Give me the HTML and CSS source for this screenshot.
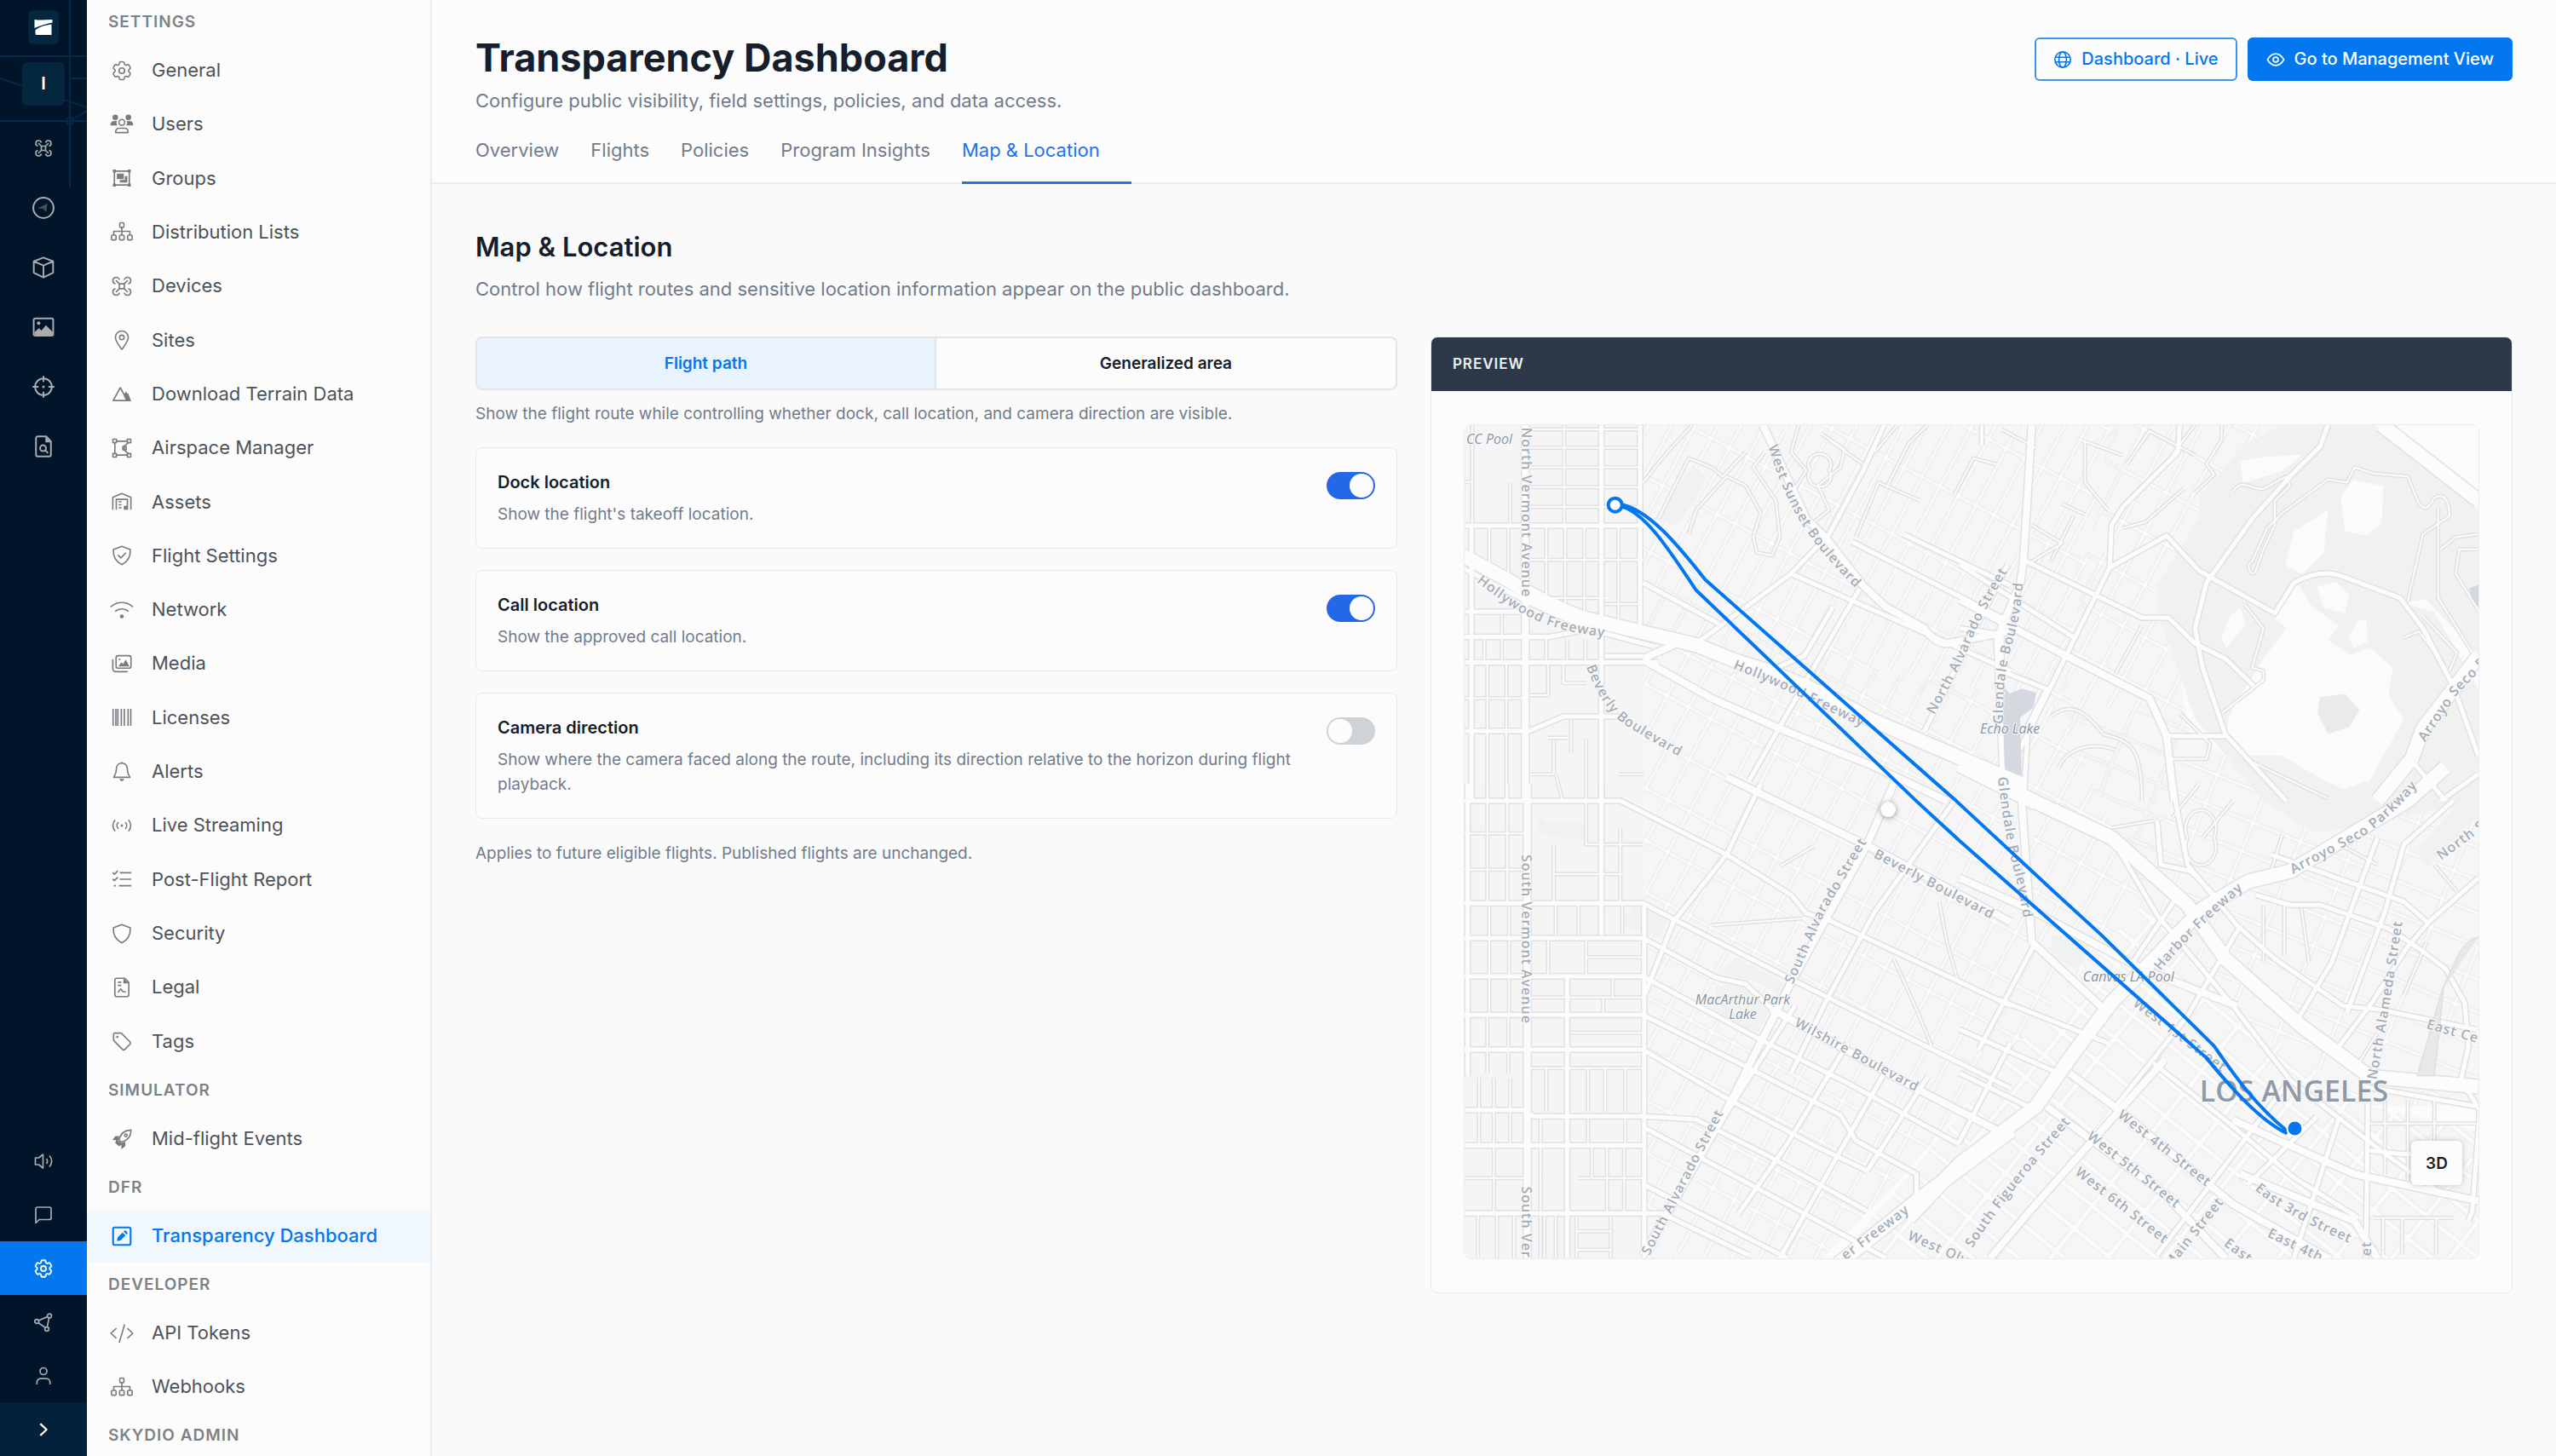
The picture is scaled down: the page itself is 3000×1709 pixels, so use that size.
FILE: index.html
```html
<!DOCTYPE html>
<html lang="en">
<head>
<meta charset="utf-8">
<meta name="viewport" content="width=device-width, initial-scale=1">
<title>Transparency Dashboard · Map &amp; Location</title>
<link rel="stylesheet" href="styles.css">
</head>
<body>
<svg class="sprite" aria-hidden="true">
  <symbol id="i-gear" viewBox="0 0 24 24"><path d="M9.594 3.94c.09-.542.56-.94 1.11-.94h2.593c.55 0 1.02.398 1.11.94l.213 1.281c.063.374.313.686.645.87.074.04.147.083.22.127.325.196.72.257 1.075.124l1.217-.456a1.125 1.125 0 0 1 1.37.49l1.296 2.247a1.125 1.125 0 0 1-.26 1.431l-1.003.827c-.293.241-.438.613-.43.992a7.723 7.723 0 0 1 0 .255c-.008.378.137.75.43.991l1.004.827c.424.35.534.955.26 1.43l-1.298 2.247a1.125 1.125 0 0 1-1.369.491l-1.217-.456c-.355-.133-.75-.072-1.076.124a6.47 6.47 0 0 1-.22.128c-.331.183-.581.495-.644.869l-.213 1.281c-.09.543-.56.94-1.11.94h-2.594c-.55 0-1.019-.398-1.11-.94l-.213-1.281c-.062-.374-.312-.686-.644-.87a6.52 6.52 0 0 1-.22-.127c-.325-.196-.72-.257-1.076-.124l-1.217.456a1.125 1.125 0 0 1-1.369-.49l-1.297-2.247a1.125 1.125 0 0 1 .26-1.431l1.004-.827c.292-.24.437-.613.43-.991a6.932 6.932 0 0 1 0-.255c.007-.38-.138-.751-.43-.992l-1.004-.827a1.125 1.125 0 0 1-.26-1.43l1.297-2.247a1.125 1.125 0 0 1 1.37-.491l1.216.456c.356.133.751.072 1.076-.124.072-.044.146-.086.22-.128.332-.183.582-.495.644-.869l.214-1.28Z"/><circle cx="12" cy="12" r="2.8"/></symbol>
  <symbol id="i-users" viewBox="0 0 24 24"><g class="solid"><circle cx="5.4" cy="5" r="2.8"/><circle cx="18.6" cy="5" r="2.8"/><path d="M.5 13c0-3 1.600-4.400 4-4.400h2.600c-.8 1.800-.5 3.200.6 4.400zM23.500 13c0-3-1.600-4.400-4-4.400h-2.600c.8 1.800.5 3.200-.6 4.400z"/></g><circle cx="12" cy="10" r="2.900"/><path d="M5.700 20.200c0-3 1.400-4.300 3.600-4.300h5.400c2.200 0 3.600 1.300 3.600 4.300z"/></symbol>
  <symbol id="i-groups" viewBox="0 0 24 24"><path d="M4.500 5h15v14h-15z"/><g class="solid"><path d="M7 7.500h7v5.500H7zM15 10h2.500v6.500H10V14h5z"/><path d="M3 3.500h3v3H3zM18 3.500h3v3h-3zM3 17.500h3v3H3zM18 17.500h3v3h-3z"/></g></symbol>
  <symbol id="i-tree" viewBox="0 0 24 24"><rect x="9.900" y="3" width="4.200" height="4.600" rx="1"/><rect x="1.600" y="15.400" width="4.600" height="4.800" rx="1"/><rect x="9.700" y="15.400" width="4.600" height="4.800" rx="1"/><rect x="17.800" y="15.400" width="4.600" height="4.800" rx="1"/><path d="M12 7.600v7.800M3.900 15.400v-3.800h16.200v3.800"/></symbol>
  <symbol id="i-drone" viewBox="0 0 24 24"><path d="M9.500 9.500h5v5h-5zM9.500 9.500 6 6M14.500 9.500 18 6M9.500 14.500 6 18M14.500 14.500 18 18"/><path d="M9.500 5.500a3.300 3.300 0 1 0-4 4M14.500 5.500a3.300 3.300 0 1 1 4 4M9.500 18.500a3.300 3.300 0 1 1-4-4M14.500 18.500a3.300 3.300 0 1 0 4-4"/></symbol>
  <symbol id="i-pin" viewBox="0 0 24 24"><path d="M12 21.500c-2.500-3.500-6.500-8-6.500-12a6.500 6.500 0 0 1 13 0c0 4-4 8.500-6.500 12z"/><circle cx="12" cy="9.500" r="2.300"/></symbol>
  <symbol id="i-terrain" viewBox="0 0 24 24"><path d="M3.300 19 10.500 6l3.700 7 2.800 6z"/><path class="solid" d="M14.500 12.500l1.700-2.700 1.300 2 1 .2 2.900 7.700h-4z"/></symbol>
  <symbol id="i-airspace" viewBox="0 0 24 24"><path d="M6 5h12M6 19h12M5 6.500v11M18.500 6.500l-4 3.500v4l4 3.500"/><rect x="3" y="3" width="3.500" height="3.500"/><rect x="17.500" y="3" width="3.500" height="3.500"/><rect x="3" y="17.500" width="3.500" height="3.500"/><rect x="17.500" y="17.500" width="3.500" height="3.500"/><rect x="13" y="10.300" width="3.400" height="3.400"/></symbol>
  <symbol id="i-assets" viewBox="0 0 24 24"><path d="M2.900 20V7.500L12 3.700l9.100 3.800V20M6.400 20V9.500h11.200V20M8.800 12h3M8.800 15h3M8.800 18h3"/><path class="solid" d="M14 16h3.500v4H14z"/></symbol>
  <symbol id="i-shield-check" viewBox="0 0 24 24"><path d="M12 2.800 20.500 6c.4 6.500-2 12-8.500 15.200C5.500 18 3.100 12.500 3.500 6zM8 11.500l3 3 5.200-5.300"/></symbol>
  <symbol id="i-shield" viewBox="0 0 24 24"><path d="M12 2.800 20.500 6c.4 6.500-2 12-8.500 15.200C5.500 18 3.100 12.500 3.500 6z"/></symbol>
  <symbol id="i-wifi" viewBox="0 0 24 24"><path d="M.8 8.800c6.400-5.700 16-5.700 22.400 0M5.200 13.400c4-3.300 9.600-3.300 13.600 0"/><circle class="solid" cx="12" cy="18.500" r="1.900"/></symbol>
  <symbol id="i-media" viewBox="0 0 24 24"><rect x="6.200" y="4" width="15" height="12.500" rx="2"/><path d="M2.900 7.500v9.500a3 3 0 0 0 3 3h12"/><path class="solid" d="M8.500 14.800 11.500 10.500l1.700 2 2.800-4.500 3.600 6.800z"/><circle class="solid" cx="9.800" cy="7.700" r=".9"/></symbol>
  <symbol id="i-barcode" viewBox="0 0 24 24"><path d="M3.200 3.500v17M6 3.500v17M8 3.500v17M11.500 3.500v17M14.500 3.500v17M18.300 3.500v17M21 3.500v17"/></symbol>
  <symbol id="i-bell" viewBox="0 0 24 24"><path d="M12 3.200c-3.600 0-5.500 2.800-5.500 6 0 4.300-1.500 6-2.700 8.300h16.400c-1.200-2.300-2.700-4-2.700-8.300 0-3.200-1.900-6-5.500-6zM12 2v1.200"/><path class="solid" d="M9.800 19h4.400c-.3 3-4.100 3-4.400 0z"/></symbol>
  <symbol id="i-live" viewBox="0 0 24 24"><path d="M5.300 6.200c-3 3.400-3 8.200 0 11.600M18.700 6.200c3 3.400 3 8.200 0 11.600M8.600 8.600c-2 2-2 4.800 0 6.800M15.400 8.600c2 2 2 4.800 0 6.800"/><circle class="solid" cx="12" cy="12" r="1.300"/></symbol>
  <symbol id="i-checklist" viewBox="0 0 24 24"><path d="M10 5.500h11.500M10 12h11.500M9 18.500h12.500M2.800 5.200l1.700 1.700L8 3.500M2.800 11.700l1.700 1.700L8 10"/><circle class="solid" cx="5" cy="18.500" r="1"/></symbol>
  <symbol id="i-legal" viewBox="0 0 24 24"><path d="M15 2.800H7a2 2 0 0 0-2 2v14.400a2 2 0 0 0 2 2h10a2 2 0 0 0 2-2V7zM8 6.800h3.500M8 10h3.500M8 17c1.500-1 2-3.500 3-3.500s.8 2.500 2 2.500 1.500.5 3 .5"/><path class="solid" d="M13.500 2.800V8H19z"/></symbol>
  <symbol id="i-tag" viewBox="0 0 24 24"><path d="M3.700 5v6.300L12.800 20.400a1.500 1.500 0 0 0 2.100 0L20.300 15a1.500 1.500 0 0 0 0-2.100L11.400 4H4.700a1 1 0 0 0-1 1z"/><circle class="solid" cx="7.500" cy="7.800" r="1.200"/></symbol>
  <symbol id="i-rocket" viewBox="0 0 24 24"><path d="M9 12.500C11 6 15.500 3 21.300 2.900 21.300 8.500 18 13 11.700 15.300z"/><circle cx="16" cy="8.200" r="1.300"/><path class="solid" d="M9.500 9H5.500L2.500 12.800l3.800.3-1 2.700 3.700 3.200 2.500-1v4.200l4-3.200v-4.500l-4 1.700-3.400-3z"/></symbol>
  <symbol id="i-edit" viewBox="0 0 24 24"><rect x="3.200" y="3.200" width="17.600" height="17.600" rx="1.500"/><path class="solid" d="M7 17l.8-3.700 5-5 2.900 2.900-5 5zM13.800 7.300l1-1c.8-.8 3.700 2.100 2.900 2.900l-1 1z"/></symbol>
  <symbol id="i-code" viewBox="0 0 24 24"><path d="M6.500 7 1 12l5.500 5M17.500 7l5.500 5-5.500 5M14.800 3 9.400 21.500"/></symbol>
  <symbol id="i-globe" viewBox="0 0 24 24"><circle cx="12" cy="12" r="10"/><ellipse cx="12" cy="12" rx="4.800" ry="10"/><path d="M2.500 9h19M2.500 15h19"/></symbol>
  <symbol id="i-eye" viewBox="0 0 24 24"><path d="M1.500 12C5 6.200 8.500 4.500 12 4.500S19 6.200 22.500 12C19 17.800 15.500 19.500 12 19.500S5 17.800 1.500 12z"/><circle cx="12" cy="12" r="3.200"/></symbol>
  <symbol id="i-compass" viewBox="0 0 24 24"><circle cx="12" cy="12" r="10.200"/><path class="dim" d="M6 12.500 16 7.500l-1.200 9-3-3.600z"/></symbol>
  <symbol id="i-cube" viewBox="0 0 24 24"><path d="M12 2 21.700 5.800v11.400L12 22l-9.700-4.800V5.800zM2.300 5.800 12 10l9.700-4.200M12 10v12"/></symbol>
  <symbol id="i-image" viewBox="0 0 24 24"><rect x="2.200" y="3.200" width="19.600" height="17.300" rx="1.500"/><circle class="solid" cx="7.200" cy="8" r="1.700"/><path class="solid" d="M3 20v-3l4.500-4 2.500 2.500 4.500-5.500 6.800 7V20z"/></symbol>
  <symbol id="i-target" viewBox="0 0 24 24"><circle cx="12" cy="12" r="8.400"/><path d="M12 1v6M12 17v6M1 12h6M17 12h6"/><circle class="solid" cx="12" cy="12" r="1.300"/></symbol>
  <symbol id="i-file-search" viewBox="0 0 24 24"><path d="M15 2H6.200A1.700 1.700 0 0 0 4.500 3.700v16.600A1.700 1.700 0 0 0 6.200 22h11.600a1.700 1.700 0 0 0 1.700-1.700V7z"/><path class="solid" d="M14 2v6h5.500z"/><circle cx="11.600" cy="13.800" r="3"/><path d="M14 16l2.500 2.800"/></symbol>
  <symbol id="i-sound" viewBox="0 0 24 24"><path d="M2.500 8v8h4l5 4V4l-5 4zM15.500 9c1.500 1.500 1.500 4.500 0 6M19 5.500c3.500 3.500 3.500 9.500 0 13"/></symbol>
  <symbol id="i-chat" viewBox="0 0 24 24"><path d="M3 21.500V5a2 2 0 0 1 2-2h14a2 2 0 0 1 2 2v10.500a2 2 0 0 1-2 2H7z"/></symbol>
  <symbol id="i-share" viewBox="0 0 24 24"><circle cx="4.200" cy="11" r="2.400"/><circle cx="19" cy="4.500" r="2.400"/><circle cx="16" cy="20" r="2.400"/><path d="M6.400 10 16.800 5.400M18.500 6.900 16.400 17.600M6 12.700l8.200 5.600"/></symbol>
  <symbol id="i-person" viewBox="0 0 24 24"><circle cx="12" cy="6.500" r="4"/><path d="M4.300 22v-2.500a4.300 4.300 0 0 1 4.300-4.300h6.800a4.300 4.300 0 0 1 4.300 4.300V22"/></symbol>
  <symbol id="i-chevron" viewBox="0 0 24 24"><path d="M8 4.500 16 12l-8 7.500"/></symbol>
  <symbol id="i-logo" viewBox="0 0 24 24"><path class="solid" d="M1.500 3C7 3.800 14 3.500 22.500 3v3.500C15 8 8 10 1.500 13zM21.500 8.500 21.500 21H3c-.6-2-.7-3.800-.5-5.800C7 11.500 14 9.500 21.500 8.500z"/></symbol>
</svg>

<div class="app">
  <nav class="rail" aria-label="Primary">
    <svg class="rail-lines" viewBox="0 0 102 240" aria-hidden="true"><path d="M0 66h102M0 142h102M82 0v220M82 92h20M0 92l102 34M82 142l20-12"/><circle cx="82" cy="142" r="4"/></svg>
    <a class="rail-logo" href="#" aria-label="Home"><svg><use href="#i-logo"/></svg></a>
    <button class="rail-org" type="button">I</button>
    <div class="rail-top">
      <a href="#" aria-label="Drones"><svg class="small"><use href="#i-drone"/></svg></a>
      <a href="#" aria-label="Compass"><svg><use href="#i-compass"/></svg></a>
      <a href="#" aria-label="Models"><svg><use href="#i-cube"/></svg></a>
      <a href="#" aria-label="Media"><svg><use href="#i-image"/></svg></a>
      <a href="#" aria-label="Targets"><svg><use href="#i-target"/></svg></a>
      <a href="#" aria-label="Reports"><svg><use href="#i-file-search"/></svg></a>
    </div>
    <div class="rail-bottom">
      <a href="#" aria-label="Sound"><svg class="small"><use href="#i-sound"/></svg></a>
      <a href="#" aria-label="Messages"><svg class="small"><use href="#i-chat"/></svg></a>
      <a class="active" href="#" aria-label="Settings"><svg><use href="#i-gear"/></svg></a>
      <a href="#" aria-label="Integrations"><svg class="small"><use href="#i-share"/></svg></a>
      <a href="#" aria-label="Account"><svg class="small"><use href="#i-person"/></svg></a>
      <button class="expand" type="button" aria-label="Expand"><svg><use href="#i-chevron"/></svg></button>
    </div>
  </nav>

  <nav class="sidebar" aria-label="Settings">
    <h2>Settings</h2>
    <ul class="settings-list">
      <li><a href="#"><svg><use href="#i-gear"/></svg>General</a></li>
      <li><a href="#"><svg><use href="#i-users"/></svg>Users</a></li>
      <li><a href="#"><svg><use href="#i-groups"/></svg>Groups</a></li>
      <li><a href="#"><svg><use href="#i-tree"/></svg>Distribution Lists</a></li>
      <li><a href="#"><svg><use href="#i-drone"/></svg>Devices</a></li>
      <li><a href="#"><svg><use href="#i-pin"/></svg>Sites</a></li>
      <li><a href="#"><svg><use href="#i-terrain"/></svg>Download Terrain Data</a></li>
      <li><a href="#"><svg><use href="#i-airspace"/></svg>Airspace Manager</a></li>
      <li><a href="#"><svg><use href="#i-assets"/></svg>Assets</a></li>
      <li><a href="#"><svg><use href="#i-shield-check"/></svg>Flight Settings</a></li>
      <li><a href="#"><svg><use href="#i-wifi"/></svg>Network</a></li>
      <li><a href="#"><svg><use href="#i-media"/></svg>Media</a></li>
      <li><a href="#"><svg><use href="#i-barcode"/></svg>Licenses</a></li>
      <li><a href="#"><svg><use href="#i-bell"/></svg>Alerts</a></li>
      <li><a href="#"><svg><use href="#i-live"/></svg>Live Streaming</a></li>
      <li><a href="#"><svg><use href="#i-checklist"/></svg>Post-Flight Report</a></li>
      <li><a href="#"><svg><use href="#i-shield"/></svg>Security</a></li>
      <li><a href="#"><svg><use href="#i-legal"/></svg>Legal</a></li>
      <li><a href="#"><svg><use href="#i-tag"/></svg>Tags</a></li>
    </ul>
    <h2>Simulator</h2>
    <ul><li><a href="#"><svg><use href="#i-rocket"/></svg>Mid-flight Events</a></li></ul>
    <h2>DFR</h2>
    <ul><li><a class="active" href="#" aria-current="page"><svg><use href="#i-edit"/></svg>Transparency Dashboard</a></li></ul>
    <h2>Developer</h2>
    <ul>
      <li><a href="#"><svg><use href="#i-code"/></svg>API Tokens</a></li>
      <li><a href="#"><svg><use href="#i-tree"/></svg>Webhooks</a></li>
    </ul>
    <h2>Skydio Admin</h2>
  </nav>

  <main class="main">
    <header class="page-head">
      <div class="head-row">
        <div>
          <h1>Transparency Dashboard</h1>
          <p class="lead">Configure public visibility, field settings, policies, and data access.</p>
        </div>
        <div class="actions">
          <button class="btn outline" type="button"><svg><use href="#i-globe"/></svg>Dashboard · Live</button>
          <button class="btn primary" type="button"><svg><use href="#i-eye"/></svg>Go to Management View</button>
        </div>
      </div>
      <nav class="tabs" aria-label="Dashboard sections">
        <a href="#">Overview</a>
        <a href="#">Flights</a>
        <a href="#">Policies</a>
        <a href="#">Program Insights</a>
        <a class="active" href="#" aria-current="page">Map &amp; Location</a>
      </nav>
    </header>

    <section class="content">
      <h2 class="section-title">Map &amp; Location</h2>
      <p class="section-lead">Control how flight routes and sensitive location information appear on the public dashboard.</p>
      <div class="columns">
        <form class="options">
          <div class="segmented" role="radiogroup" aria-label="Route display">
            <label><input type="radio" name="route" checked>Flight path</label>
            <label><input type="radio" name="route">Generalized area</label>
          </div>
          <p class="hint">Show the flight route while controlling whether dock, call location, and camera direction are visible.</p>
          <div class="cards">
            <div class="option">
              <div><label for="dock">Dock location</label><p>Show the flight's takeoff location.</p></div>
              <input class="switch" id="dock" type="checkbox" role="switch" checked>
            </div>
            <div class="option">
              <div><label for="call">Call location</label><p>Show the approved call location.</p></div>
              <input class="switch" id="call" type="checkbox" role="switch" checked>
            </div>
            <div class="option">
              <div><label for="camera">Camera direction</label><p>Show where the camera faced along the route, including its direction relative to the horizon during flight playback.</p></div>
              <input class="switch" id="camera" type="checkbox" role="switch">
            </div>
          </div>
          <p class="note">Applies to future eligible flights. Published flights are unchanged.</p>
        </form>

        <section class="preview">
          <h3>Preview</h3>
          <div class="preview-body">
            <div class="map">
              <svg class="map-art" viewBox="0 0 1192 980" preserveAspectRatio="xMidYMid slice" role="img" aria-label="Flight route over Los Angeles">
                <defs>
                  <pattern id="blocks-mid" width="29" height="54" patternUnits="userSpaceOnUse" patternTransform="translate(212 182) rotate(28)"><rect class="block" x="2" y="2" width="25" height="50"/></pattern>
                  <pattern id="blocks-hill" width="24" height="76" patternUnits="userSpaceOnUse" patternTransform="translate(212 60) rotate(28)"><rect class="block" x="2" y="2" width="20" height="72"/></pattern>
                  <pattern id="blocks-east" width="60" height="36" patternUnits="userSpaceOnUse" patternTransform="translate(760 400) rotate(22)"><rect class="block" x="2" y="2" width="56" height="32"/></pattern>
                  <pattern id="blocks-town" width="52" height="34" patternUnits="userSpaceOnUse" patternTransform="translate(700 800) rotate(39)"><rect class="block" x="3" y="3" width="46" height="28"/></pattern>

                  <g id="streets">
                    <g transform="translate(-58 -118) scale(.4464 .3571)">
                      <path class="minor" d="M130 518h20M150 329v330M250 520v140M300 345h290M300 405h290M300 470h290M300 535h290M300 600h290M392 329v330M195 665v130M245 665v170M345 665v245M395 665v280M445 665v290M535 665v330M300 775h300M350 900h150M500 920h100M182 1035v80M228 955v155M345 1035v80M400 1035v80M448 1035v80M130 1230h160M190 1115v220M240 1115v220M190 1340v228M240 1340v228M350 1120v100h-50M390 1120v60h60M350 1360h50M365 1370v110h-60M410 1300v110M450 1360v210M535 1480h65M370 1480l18 88"/>
                      <path class="minor" d="M600 520l60-95 70-95M640 640l80-200 60 30 30 30 60-80M720 690l20-80 80-110 50 30 40 90-20 80 10 50 40 10 20-60-10-120-60-110 30-50M1000 540l30-60-40-60 20-90M1050 650l40-40-30-80 60-60 10-60-60-50M1180 460l-90-80M1210 420l60-90M1240 540l60-150 50-60M1040 480a30 35 0 1 0 50 0a30 35 0 1 0-50 0M1420 560l50-120 60 20M1490 400v-70M1160 700l60-180 110 60"/>
                      <path class="mid" d="M148 662v906M490 329v1239M592 329v680M130 662h470M130 945h155M130 1028h225l80-20M130 1112h510M500 1092h100M130 1338h170l90-48h150M600 850l200 135M740 1050 990 820l100-130 90-210 55-151M1170 870l-140 300-150 330M1150 715l418 265M1285 690l283 170M1340 1340l220-550M990 820l578 320M1100 930l-75 160-110 60M130 805l170 110 150 85 180 60"/>
                      <path class="major" d="M290 329v1239M915 329l45 121 70 190 50 60 100 160 60 70 100 70q30 50 60 50l168-40M610 1110l170 120 180 100 240 120 200 118M600 1100l80-45"/>
                      <path class="highway" d="M110 750l140 95q90 75 190 120l160 48 140 42 110 55q160 55 350 190l400 215"/>
                    </g>
                    <g transform="translate(582 -118) scale(.4464 .3571)">
                      <path class="minor" d="M60 329v70M110 345l90 60M320 380l110 50M440 460l60-110 120 80M330 380v140l60 90M270 590l60 35M240 780l60-150M430 670l60-20 100-110M620 329l-60 100M690 329v50l-40 80 20 35-50 60M720 550c20-50 60 0 80-10l60-40 10 30-40 50v80l-30 80 -20 70c-10 30-30-20-10-30l40-110 40-50 120-110 50 10 20-50 50 20 90 10 30 90c20 30 30 0 40-20 30-20 40 20 40 60l-70 60-40 220M1260 600v300l50 100 40 80M1366 690l-60 10-40 40M1366 740h-50l-10 80 30 60 30 60M750 920l50 80-30 130 30 10v30l-110 110M130 1150l100 50M190 780l80-60-80-60M410 1150l70-160M240 1290c60-60 100 0 140 60 80 20 100 60 100 218M260 1460c20-60 80-90 150-60M560 1430h90l10-50-80-100M770 1440l100 60 100 60M1170 1030l40-20 70 120M1220 960l90 120-20 60"/>
                      <path class="mid" d="M580 329l-5 91-145 180-30 60-5 140-115 290-130 330M395 800l150-105 85 115 200 140 50-100q70-50 130-20l150 70 60 100 80 190M970 329l-20 71-80 100-100 140-120 210-30 150 20 130 60 220 160 218M160 770l320 195h70l70 85 80 50 75 90M545 1355h155M1300 1190l66 230M1180 1420l100 148M0 790l300 240M0 1000l110 20 0 120 120 60-50 120-10 220M1366 1480l-100 88"/>
                      <path class="major" d="M190 329l-22 450-8 70-60 180 15 440M0 905l280 185 220 140 45 125 20 213"/>
                      <path class="highway" d="M1110 329l256 250M1366 1090l-66 110-80 130-30 100-90 138M0 1450l200 125"/>
                    </g>
                    <g transform="translate(-58 422) scale(.4464 .3954)">
                      <path class="minor" d="M190 0v350M242 0v350M130 147h160M130 255h160M450 50v130h150M540 130v220M365 180v170M365 268h180M195 365v320M247 365v320M370 360v90M430 360v90M545 360v90M350 465v100M450 465v100M450 515h150M300 635h300M520 575v60M495 635v50M410 740h190M190 690v170M245 690v170M300 845h300M168 875v200M207 875v200M250 875v200M345 845v130M455 845v130M500 845v130M553 845v130M330 990v80M455 990v80M553 990v80M130 1172h160M207 1080v200M330 1080v330M430 1172h170M465 1080v90M505 1080v200M550 1080v200M165 1280v130M215 1280v130M260 1280v130M340 1280v130M370 1280v130M425 1285v125M515 1285v125M425 1330h90M425 1385h90M960 245l90-60M780 420l240-20M1260 520l60 150 40 110M1380 350l20 120 30 120"/>
                      <path class="mid" d="M138 0v870M490 0v450M400 570v840M603 350v1060M130 50h410l280 160 170 120 40 55 50 15 488 260M130 355h470l120 70 260 150 588 330M130 458h470l190 117 80 20 70 75M130 572h470l300 183 240 135 290 180M130 687h470l270 153 250 145 40 75 160 100v70M130 790h470l220 145 240 145 130 70M130 970h155l25 18h290l140 10 180 102 270 170M130 1075h470M130 1277h520l230 125M600 1020l380 230 260 160M600 640l80-230 140-200 90-210M600 1190l380 220M740 1120l260-460M850 1280l130-210 160-300M960 1410l280-560M1080 650l130-270 210-330M990 860l90-210M1430 1070l138-300M1190 1150l160-280"/>
                      <path class="major" d="M295 0v1410M600 1400l210-410 180-400 200-410 70-180M940 670l370 230 240 140M820-20l400 220 348 210"/>
                      <path class="highway" d="M1100 1440l220-200 250-210"/>
                    </g>
                    <g transform="translate(582 422) scale(.4464 .3954)">
                      <path class="minor" d="M560 100l70-100M640 160l80-110M400 130l110-20M850 150l-30 110M600 160a40 55 0 1 0 70 0a40 55 0 1 0-70 0M800 360v170M855 360v150M900 370l20 160M1090 1290h210M1115 1290v110M1165 1290v110M1255 1290v110M1120 930v230M1180 940v240M1250 940v250M1080 1010h280M1040 850l60-110M1230 470l-60 160M1000 180l100 60M1250 240l60 80"/>
                      <path class="mid" d="M560 0l40 240 130 180 100 100 180 140 90 10 260 60M780 330l90 30 80 0 180 70 80 60 70 60 50 100 10 130-20 100 50 90-20 300-10 30M820 210l350 140 60 60M1366 280l-130 130-60 80-90 160-100 150M1100 160l-120 370-90 170M1300 50l-130 130-50 200-100 300M400 160l120 230 200 270 150 220 250 220 150 120M520 110l10 130 80 20 60 70M740 420l-140 270-190 270M870 880l-350 520M1075 950l-5 460M1366 960l-300-60M1080 1090l80 10h60M1050 1290l-170-120-180-170-190-170M200 470l-150 320M0 730l260 130M100 640l290 130M450 540l120-200M1000 990l-120 420M0 860l200 110M940 990l-180 200"/>
                      <path class="major" d="M0 280l180 90 300 180 250 110M190 470l-30-470M190 470l200 210M290 860l130 110 300 280 250 160M740 1160l300 140 60 110M720 1000l320 160 326 80M230 960l310 260 160 190M540 820l-340 430-120 160"/>
                      <path class="highway" d="M100 0l300 160 200 200 100 160 200 200 180 150 286 30M-134 1290l134-160 200-170 100-160 100-150 240-280 120-80 110-30 310-210 100-100"/>
                    </g>
                  </g>

                  <path id="t-nvermont" d="M67 3V260"/><path id="t-svermont" d="M67 505V760"/><path id="t-svermont2" d="M67 895V1200"/>
                  <path id="t-holly1" d="M14 184Q60 222 100 236Q140 249 200 252"/><path id="t-holly2" d="M315 286Q375 310 405 325T500 370"/>
                  <path id="t-sunset" d="M357 25Q375 85 400 122Q425 160 490 222"/><path id="t-nalv" d="M552 341Q575 300 590 268Q610 215 655 145"/>
                  <path id="t-glen1" d="M633 352Q632 290 646 250Q656 215 658 160"/><path id="t-glen2" d="M627 414Q635 490 650 540L664 620"/>
                  <path id="t-arroyo1" d="M1129 373L1166 318L1230 250"/><path id="t-arroyo2" d="M974 528L1056 484Q1095 458 1140 400"/>
                  <path id="t-bev1" d="M143 284Q160 330 185 350Q215 370 280 405"/><path id="t-bev2" d="M480 508L640 592"/>
                  <path id="t-salv1" d="M386 658L424 572L485 470"/><path id="t-salv2" d="M217 977L314 790"/>
                  <path id="t-wil" d="M387 706L446 738L560 800"/><path id="t-harbor" d="M818 642Q860 590 935 530"/>
                  <path id="t-w1" d="M785 682L910 776"/><path id="t-alameda" d="M1072 770Q1090 670 1106 560"/>
                  <path id="t-norths" d="M1148 512L1225 455"/><path id="t-eastce" d="M1130 709L1230 738"/>
                  <path id="t-fig" d="M597 968Q640 900 730 800"/><path id="t-w4" d="M767 813L900 918"/>
                  <path id="t-w5" d="M731 838L870 948"/><path id="t-w6" d="M717 880L860 993"/>
                  <path id="t-e3" d="M929 899Q970 935 1080 978"/><path id="t-e4" d="M943 954L1060 1010"/>
                  <path id="t-e5" d="M892 964L980 1030"/><path id="t-main" d="M830 992L920 880"/>
                  <path id="t-et" d="M1066 977V900"/><path id="t-oly" d="M520 957L640 1010"/><path id="t-erf" d="M448 982L550 905"/>
                </defs>

                <rect class="land" width="1192" height="980"/>
                <path class="block-fill" d="M0 0H212V980H0z"/>
                <path fill="url(#blocks-hill)" d="M212 0H790L700 330L330 300L212 230z"/>
                <path fill="url(#blocks-mid)" d="M212 180L400 270L700 330L760 0H960L830 200L850 360L800 560L640 740L500 900L420 980H212z"/>
                <path fill="url(#blocks-east)" d="M700 330L830 340L960 440L1192 440V800L1060 800L900 690L800 560z"/>
                <path fill="url(#blocks-town)" d="M640 740L800 560L900 690L1060 800L1192 830V980H440z"/>
                <g class="park">
                  <path d="M957 0L912 27L886 59L865 82L863 110L841 146L814 189L816 225L836 282L859 346L895 389L939 442L1000 480L1192 442V100L1069 0z"/>
                  <path d="M270 90L285 60L268 48L225 108L248 118zM85 455L95 468L142 468V488L100 483L85 478zM185 580L210 560L240 580L230 602L190 590zM300 645L320 625L380 660L372 672L345 655zM296 660L330 655L358 690L345 715L290 690zM690 600L740 600L720 640L690 625z"/>
                  <path d="M1170 442L1192 430V460L1130 520L1120 500z"/>
                </g>
                <path class="land" d="M979 186L953 228L966 239L939 275L903 332L894 361L921 389L961 389L1011 418L1033 428L1064 418L1104 346L1086 318L1091 286L1064 261L1042 271L1015 253L1028 236L997 214zM912 43L935 38L985 35L960 55L915 68zM1030 85L1045 64L1080 72L1078 115L1060 130L1035 125zM1015 100L1010 150L985 175L965 165L975 125zM1002 190L1025 185L1040 200L1035 222L1010 215zM900 225L912 215L918 235L895 262L890 250zM1050 230L1060 228L1062 255L1045 262L1040 250zM1104 210L1140 220L1192 310V270L1130 205z"/>
                <path class="plaza" d="M1005 320L1035 316L1052 335L1040 355L1015 363L1003 340z"/>

                <use class="casing" href="#streets"/>
                <use class="surface" href="#streets"/>
                <path class="water" d="M633 307L641 316L655 310L672 315L669 332L653 344L655 412L635 405L633 350zM1181 192L1192 188V215L1184 204z"/>
                <path class="rail-track" d="M1192 602Q1175 606 1165 630L1150 662L1120 765H1140L1151 662"/>

                <g class="street-label">
                  <text><textPath href="#t-nvermont">North Vermont Avenue</textPath></text>
                  <text><textPath href="#t-svermont">South Vermont Avenue</textPath></text>
                  <text><textPath href="#t-svermont2">South Vermont Avenue</textPath></text>
                  <text><textPath href="#t-holly1">Hollywood Freeway</textPath></text>
                  <text><textPath href="#t-holly2">Hollywood Freeway</textPath></text>
                  <text><textPath href="#t-sunset">West Sunset Boulevard</textPath></text>
                  <text><textPath href="#t-nalv">North Alvarado Street</textPath></text>
                  <text><textPath href="#t-glen1">Glendale Boulevard</textPath></text>
                  <text><textPath href="#t-glen2">Glendale Boulevard</textPath></text>
                  <text><textPath href="#t-arroyo1">Arroyo Seco P</textPath></text>
                  <text><textPath href="#t-arroyo2">Arroyo Seco Parkway</textPath></text>
                  <text><textPath href="#t-bev1">Beverly Boulevard</textPath></text>
                  <text><textPath href="#t-bev2">Beverly Boulevard</textPath></text>
                  <text><textPath href="#t-salv1">South Alvarado Street</textPath></text>
                  <text><textPath href="#t-salv2">South Alvarado Street</textPath></text>
                  <text><textPath href="#t-wil">Wilshire Boulevard</textPath></text>
                  <text><textPath href="#t-harbor">Harbor Freeway</textPath></text>
                  <text><textPath href="#t-w1">West 1st Street</textPath></text>
                  <text><textPath href="#t-alameda">North Alameda Street</textPath></text>
                  <text><textPath href="#t-norths">North S</textPath></text>
                  <text><textPath href="#t-eastce">East Ce</textPath></text>
                  <text><textPath href="#t-fig">South Figueroa Street</textPath></text>
                  <text><textPath href="#t-w4">West 4th Street</textPath></text>
                  <text><textPath href="#t-w5">West 5th Street</textPath></text>
                  <text><textPath href="#t-w6">West 6th Street</textPath></text>
                  <text><textPath href="#t-e3">East 3rd Street</textPath></text>
                  <text><textPath href="#t-e4">East 4th</textPath></text>
                  <text><textPath href="#t-e5">East</textPath></text>
                  <text><textPath href="#t-main">Main Street</textPath></text>
                  <text><textPath href="#t-et">et</textPath></text>
                  <text><textPath href="#t-oly">West Oly</textPath></text>
                  <text><textPath href="#t-erf">er Freeway</textPath></text>
                </g>
                <g class="place-label">
                  <text x="2" y="22">CC Pool</text>
                  <text x="606" y="363">Echo Lake</text>
                  <text x="327" y="681" text-anchor="middle">MacArthur Park</text>
                  <text x="327" y="698" text-anchor="middle">Lake</text>
                  <text x="727" y="654">Canvas LA Pool</text>
                </g>
                <text class="city-label" x="975" y="795" text-anchor="middle">LOS ANGELES</text>

                <path class="route" d="M182 93C215 98 250 140 283 182L578 442L689 545L749 600L881 730C905 765 930 800 967 830M182 95C212 102 240 146 272 194L531 442L582 489L872 744C900 778 935 818 967 833"/>
                <circle class="route-start" cx="177" cy="94" r="8"/>
                <circle class="route-end" cx="976" cy="827" r="9"/>
                <circle class="call-point" cx="498" cy="452" r="9"/>
              </svg>
              <button class="view-3d" type="button">3D</button>
            </div>
          </div>
        </section>
      </div>
    </section>
  </main>
</div>
</body>
</html>
```
FILE: styles.css
```css
:root {
  --blue: #0277f0;
  --ink: #161d2b;
  --muted: #717c8c;
  --line: #e8ecee;
  --paper: #fcfcfc;
}

* { box-sizing: border-box; }

body {
  margin: 0;
  background: #fafafa;
  color: var(--ink);
  font-family: Inter, "Liberation Sans", sans-serif;
  font-size: 20px;
  line-height: 29px;
}

h1, h2, h3, p, ul { margin: 0; padding: 0; }
ul { list-style: none; }
a { color: inherit; text-decoration: none; }
button { font: inherit; cursor: pointer; }

svg {
  fill: none;
  stroke: currentColor;
  stroke-width: 1.5;
  stroke-linejoin: round;
  flex: none;
}

.solid { fill: currentColor; stroke: none; }
.dim { fill: #4a5058; stroke: none; }
.sprite { position: absolute; width: 0; height: 0; }

.app { display: flex; height: 100vh; overflow: hidden; }

/* Icon rail */
.rail {
  position: relative;
  display: flex;
  flex-direction: column;
  align-items: center;
  flex: none;
  width: 102px;
  padding-top: 12px;
  background: #001529;
  color: #a9abad;
}

.rail svg { width: 28px; height: 28px; stroke-width: 1.7; }
.rail svg.small { width: 24px; height: 24px; }

.rail .rail-lines {
  position: absolute;
  top: 0;
  left: 0;
  width: 102px;
  height: 240px;
  stroke: #05294a;
  stroke-width: 2;
}

.rail-logo, .rail-org {
  position: relative;
  display: flex;
  align-items: center;
  justify-content: center;
  border: 0;
  border-radius: 6px;
  background: #04263f;
  color: #fff;
}

.rail-logo { width: 36px; height: 40px; }
.rail .rail-logo svg { width: 24px; height: 24px; }
.rail-org { width: 50px; height: 51px; margin-top: 21px; font-weight: 600; }
.rail-top { width: 100%; margin-top: 15px; }

.rail-top a, .rail-bottom a, .expand {
  display: flex;
  align-items: center;
  justify-content: center;
  width: 100%;
  height: 63px;
}

.rail-top a { height: 70px; }
.rail-bottom { width: 100%; margin-top: auto; }
.rail-bottom .active { background: var(--blue); color: #fff; }
.rail-bottom .active svg { width: 26px; height: 26px; }
.expand { padding: 0; border: 0; background: #04213b; color: #fff; }
.expand svg { stroke-width: 2.4; width: 22px; height: 22px; }

/* Settings sidebar */
.sidebar {
  flex: none;
  width: 405px;
  overflow: hidden;
  background: var(--paper);
  border-right: 2px solid var(--line);
  color: #4e5359;
  font-size: 22px;
}

.sidebar h2 {
  padding-left: 25px;
  color: #7e8287;
  font-size: 19px;
  font-weight: 600;
  line-height: 51px;
  letter-spacing: 1px;
  text-transform: uppercase;
}

.settings-list { display: grid; grid-auto-rows: 1fr; min-height: 1203px; }

.sidebar a {
  display: flex;
  align-items: center;
  gap: 21px;
  height: 63px;
  padding-left: 27px;
}

.sidebar svg { width: 28px; height: 28px; color: #787c81; stroke-width: 1.4; }
.sidebar .active { background: #f0f7fd; color: var(--blue); font-weight: 500; }
.sidebar .active svg { color: inherit; stroke-width: 1.8; }

/* Page header */
.main { flex: 1; min-width: 0; }

.page-head {
  background: var(--paper);
  border-bottom: 2px solid #eaedf0;
  padding: 44px 51px 0;
}

.head-row { display: flex; justify-content: space-between; align-items: flex-start; }
h1 { font-size: 45px; font-weight: 700; line-height: 48px; }
.lead { margin-top: 11px; color: var(--muted); font-size: 22px; line-height: 30px; }
.actions { display: flex; gap: 12px; }

.btn {
  display: flex;
  align-items: center;
  gap: 11px;
  height: 51px;
  padding: 0 20px;
  border: 2px solid var(--blue);
  border-radius: 6px;
  font-weight: 500;
  white-space: nowrap;
}

.btn svg { width: 22px; height: 22px; stroke-width: 1.8; }
.outline { background: var(--paper); border-color: #3d94ee; color: var(--blue); }
.primary { background: var(--blue); color: #fff; }

.tabs { display: flex; margin: 28px 0 -2px; font-size: 22px; line-height: 30px; color: var(--muted); }
.tabs a { padding: 0 37px 22px 0; border-bottom: 3px solid transparent; }
.tabs .active { border-color: #2a72e2; color: #2273ea; }

/* Page content */
.content { padding: 54px 51px; }
.section-title { font-size: 31px; font-weight: 600; line-height: 40px; }
.section-lead { margin-top: 14px; color: var(--muted); font-size: 22px; line-height: 30px; }

.columns {
  display: grid;
  grid-template-columns: 46fr 54fr;
  gap: 39px;
  align-items: start;
  margin-top: 41px;
}

.segmented {
  display: grid;
  grid-template-columns: 1fr 1fr;
  height: 63px;
  overflow: hidden;
  border: 2px solid #e3e6e8;
  border-radius: 8px;
  background: var(--paper);
  font-size: 19px;
  font-weight: 600;
}

.segmented label { display: flex; align-items: center; justify-content: center; }
.segmented label:first-child { border-right: 2px solid #dfe6ec; }
.segmented label:has(:checked) { background: #e8f3fe; color: var(--blue); }
.segmented input { position: absolute; opacity: 0; }

.hint, .note, .option p { color: var(--muted); font-size: 19px; }
.hint { margin-top: 13px; }
.cards { display: grid; gap: 25px; margin-top: 25px; }

.option {
  display: flex;
  justify-content: space-between;
  gap: 20px;
  padding: 26px 25px 25px;
  border: 1px solid #e6e9eb;
  border-radius: 8px;
  background: var(--paper);
}

.option label { display: block; font-weight: 600; }
.option p { margin-top: 8px; }

.switch {
  flex: none;
  appearance: none;
  width: 57px;
  height: 32px;
  margin: 2px 0 0;
  padding: 2px;
  border-radius: 16px;
  background: #ced3d8;
}

.switch::before {
  content: "";
  display: block;
  width: 28px;
  height: 28px;
  border-radius: 14px;
  background: var(--paper);
}

.switch:checked { background: #2468e5; }
.switch:checked::before { margin-left: auto; }
.note { margin-top: 26px; }

/* Map preview */
.preview {
  overflow: hidden;
  border: 1px solid var(--line);
  border-radius: 8px;
  background: var(--paper);
}

.preview h3 {
  padding: 0 25px;
  background: #2d394a;
  color: #eef1f4;
  font-size: 17px;
  font-weight: 600;
  line-height: 63px;
  letter-spacing: 1px;
  text-transform: uppercase;
}

.preview-body { padding: 39px 38px; }

.map {
  position: relative;
  overflow: hidden;
  aspect-ratio: 1192 / 980;
  border-radius: 8px;
  border: 1px solid #e9edf0;
}

.map-art { display: block; width: 100%; height: 100%; stroke: none; }
.land { fill: #fbfbfb; }
.block-fill { fill: #f5f5f5; }
.block { fill: #f6f6f6; stroke: #e8e8e9; stroke-width: 1; }
.park { fill: #eff2ef; }
.plaza { fill: #e9ebeb; }
.water { fill: #d3d9de; }

.casing { --edge: 3px; stroke: #e1e1e3; }
.surface { --edge: 0px; stroke: #fcfcfc; }
.minor, .mid, .major, .highway { vector-effect: non-scaling-stroke; fill: none; }
.minor { stroke-width: calc(2px + var(--edge)); }
.mid { stroke-width: calc(5px + var(--edge)); }
.major { stroke-width: calc(8px + var(--edge)); }
.highway { stroke-width: calc(16px + var(--edge)); }
.rail-track { fill: #e8e8e8; stroke: #e1e1e1; stroke-width: 2; }

.street-label, .place-label, .city-label {
  font-family: "Open Sans", "Noto Sans", sans-serif;
  paint-order: stroke;
  stroke: #fafafa;
  stroke-width: 2;
}

.street-label { fill: #a3adb8; font-size: 16px; font-weight: 600; letter-spacing: 1px; }
.place-label { fill: #8793a0; font-size: 16px; font-style: italic; font-weight: 500; }
.city-label { fill: #8e9aa8; font-size: 34px; font-weight: 600; }

.route { stroke: var(--blue); stroke-width: 4; }
.route-start { fill: #fff; stroke: var(--blue); stroke-width: 4; }
.route-end { fill: var(--blue); stroke: #fff; stroke-width: 2; }
.call-point { fill: #fdfdfd; filter: drop-shadow(0 1px 3px rgb(40 40 40 / 50%)); }

.view-3d {
  position: absolute;
  right: 19px;
  bottom: 86px;
  width: 60px;
  height: 52px;
  border: 0;
  border-radius: 6px;
  background: var(--paper);
  color: var(--ink);
  box-shadow: 0 0 6px rgb(60 70 80 / 30%);
  font-size: 19px;
  font-weight: 600;
}
```
